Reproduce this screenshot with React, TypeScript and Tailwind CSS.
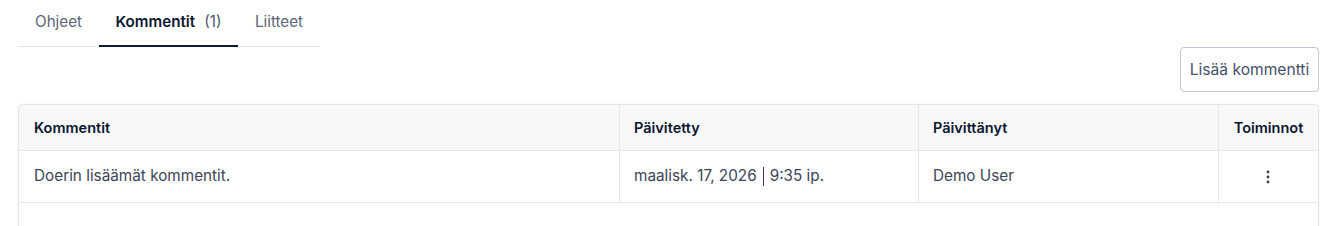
import React from "react";

export default function App() {
  return (
    <div className="w-[1340px] h-[226px] overflow-hidden bg-white pl-[18px] pr-[21px] font-['Inter','Noto_Sans',sans-serif]">
      <div className="flex w-[302px] border-b border-[#e3e3eb] h-[47px]">
        <div className="w-[81px] flex items-center justify-center text-[15.2px] text-[#5d6579] pb-[1px]">Ohjeet</div>
        <div className="w-[139px] flex items-center justify-center text-[15.2px] border-b-2 border-[#0d1b3a] -mb-px">
          <span className="font-semibold text-[#0b1631]">Kommentit</span>
          <span className="ml-[9px] text-[#4d5569]">(1)</span>
        </div>
        <div className="w-[82px] flex items-center justify-center text-[15.2px] text-[#5d6579] pb-[1px]">Liitteet</div>
      </div>
      <div className="flex justify-end">
        <button className="h-[45px] w-[139px] rounded-[4px] border border-[#bcc6d6] bg-white text-[15.6px] text-[#46526b]">
          Lisää kommentti
        </button>
      </div>
      <div className="mt-[12px] rounded-t-[5px] border border-[#e4e4e6] shadow-[0_0_2px_rgba(0,0,0,0.08)] h-[140px]">
        <div className="grid grid-cols-[600px_299px_300px_1fr]">
          <div className="h-[46px] bg-[#f8f8f9] border-b border-[#e6e6e8] px-[15px] flex items-center text-[14.5px] font-semibold text-[#0a1630] rounded-tl-[5px]">Kommentit</div>
          <div className="h-[46px] bg-[#f8f8f9] border-b border-l border-[#e6e6e8] px-[14px] flex items-center text-[14.5px] font-semibold text-[#0a1630]">Päivitetty</div>
          <div className="h-[46px] bg-[#f8f8f9] border-b border-l border-[#e6e6e8] px-[14px] flex items-center text-[14.5px] font-semibold text-[#0a1630]">Päivittänyt</div>
          <div className="h-[46px] bg-[#f8f8f9] border-b border-l border-[#e6e6e8] flex items-center justify-center text-[14.5px] font-semibold text-[#0a1630] rounded-tr-[5px]">Toiminnot</div>

          <div className="h-[52px] border-b border-[#e6e6e8] px-[15px] flex items-center text-[15.3px] text-[#3d4457]">Doerin lisäämät kommentit.</div>
          <div className="h-[52px] border-b border-l border-[#e6e6e8] px-[14px] flex items-center text-[15.3px] text-[#3d4457]">
            <span>maalisk. 17, 2026</span>
            <span className="mx-[6px] inline-block w-px h-[19px] bg-[#5a2a3a]" />
            <span>9:35 ip.</span>
          </div>
          <div className="h-[52px] border-b border-l border-[#e6e6e8] px-[14px] flex items-center text-[15.3px] text-[#3d4457]">Demo User</div>
          <div className="h-[52px] border-b border-l border-[#e6e6e8] flex items-center justify-center">
            <svg width="4" height="14" viewBox="0 0 4 14" className="ml-[-2px]">
              <circle cx="2" cy="2" r="1.4" fill="#3a3f4a" />
              <circle cx="2" cy="7" r="1.4" fill="#3a3f4a" />
              <circle cx="2" cy="12" r="1.4" fill="#3a3f4a" />
            </svg>
          </div>
        </div>
      </div>
    </div>
  );
}
